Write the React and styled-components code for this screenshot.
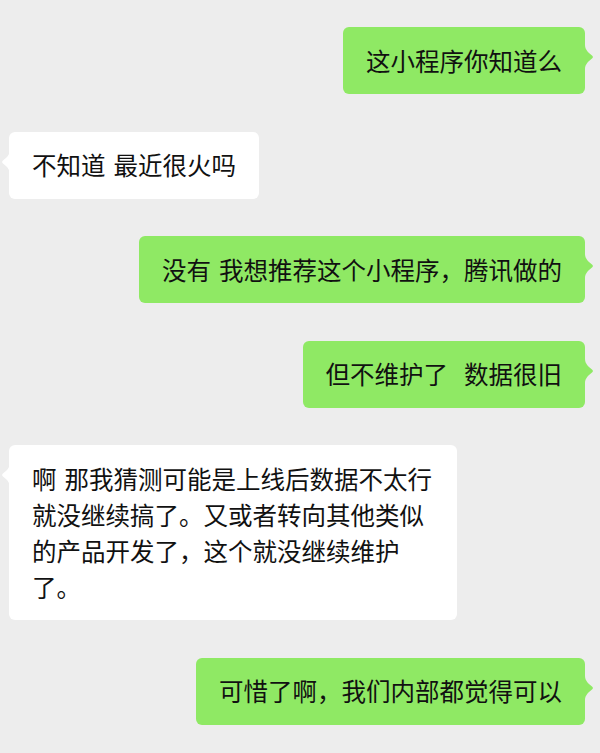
import React from 'react';
import styled, { createGlobalStyle } from 'styled-components';

const GlobalStyle = createGlobalStyle`
  html, body {
    margin: 0;
    padding: 0;
    background: #ededed;
  }
  * {
    box-sizing: border-box;
  }
`;

const Chat = styled.div`
  width: 600px;
  min-height: 753px;
  background: #ededed;
  padding: 27px 15px 30px 9px;
  display: flex;
  flex-direction: column;
  gap: 37.5px;
  font-family: "Noto Sans CJK SC", "Noto Sans", sans-serif;
`;

const Row = styled.div`
  display: flex;
  justify-content: ${(p) => (p.$mine ? 'flex-end' : 'flex-start')};
`;

const Bubble = styled.div`
  position: relative;
  max-width: 448px;
  padding: 15.5px 23px;
  border-radius: 6px;
  background: ${(p) => (p.$mine ? '#8fe964' : '#ffffff')};
  color: #111111;
  font-size: 24.5px;
  line-height: 36px;
  word-spacing: 2.5px;
  white-space: pre-wrap;
  word-break: break-all;
`;

const Tail = styled.svg`
  position: absolute;
  top: 18px;
  width: 8px;
  height: 24px;
  ${(p) => (p.$mine ? 'right: -7.5px;' : 'left: -7.5px; transform: scaleX(-1);')}
  fill: ${(p) => (p.$mine ? '#8fe964' : '#ffffff')};
`;

const messages = [
  { mine: true, text: '这小程序你知道么' },
  { mine: false, text: '不知道 最近很火吗' },
  { mine: true, text: '没有 我想推荐这个小程序，腾讯做的' },
  { mine: true, text: '但不维护了  数据很旧' },
  {
    mine: false,
    text: '啊 那我猜测可能是上线后数据不太行就没继续搞了。又或者转向其他类似的产品开发了，这个就没继续维护了。',
  },
  { mine: true, text: '可惜了啊，我们内部都觉得可以' },
];

const Message = ({ mine, text }) => (
  <Row $mine={mine}>
    <Bubble $mine={mine}>
      <Tail $mine={mine} viewBox="0 0 8 24">
        <path d="M0 0 C0 5 4 8 7 10.5 C8.2 11.4 8.2 12.6 7 13.5 C4 16 0 19 0 24 Z" />
      </Tail>
      {text}
    </Bubble>
  </Row>
);

const App = () => (
  <>
    <GlobalStyle />
    <Chat>
      {messages.map((m, i) => (
        <Message key={i} {...m} />
      ))}
    </Chat>
  </>
);

export default App;
